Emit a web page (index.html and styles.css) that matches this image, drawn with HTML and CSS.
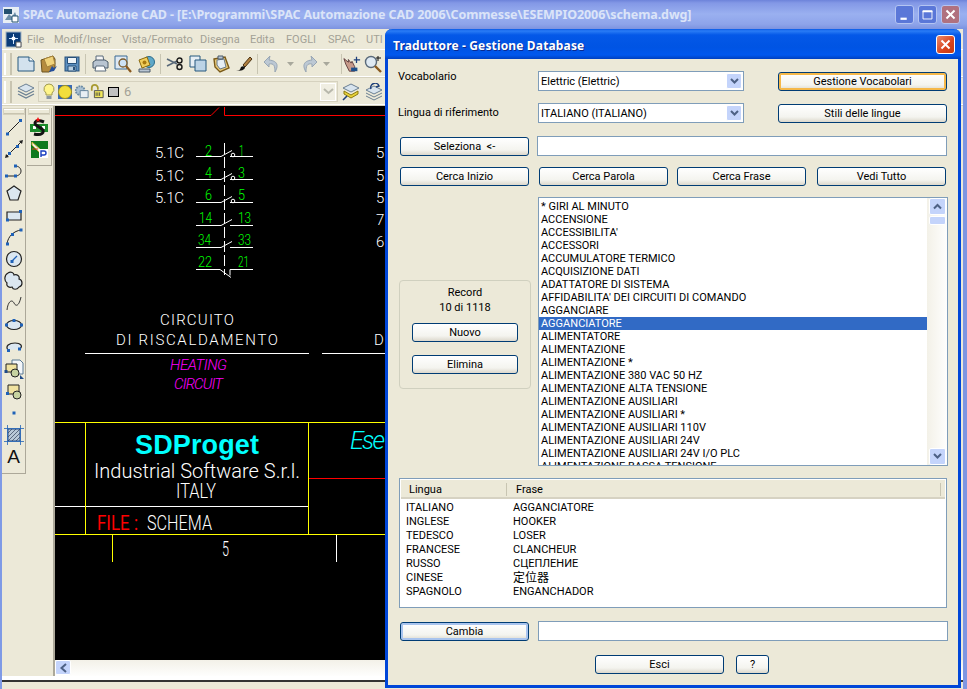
FILE: index.html
```html
<!DOCTYPE html>
<html lang="it">

<head>
    <meta charset="UTF-8">
    <meta name="viewport" content="width=device-width, initial-scale=1.0">
    <title>SPAC Automazione CAD</title>
    <link rel="stylesheet" href="styles.css">
</head>

<body>
    <div id="desktop">
        <!-- Finestra principale -->
        <div id="main-window">
            <div class="main-title">
                <svg class="app-icon" width="16" height="16" viewBox="0 0 16 16"><rect width="16" height="16" fill="#e8eef4"/><path d="M1 2h8v5H1z" fill="#23506e"/><path d="M2 13l4-6 3 3 3-5 3 8z" fill="#6d8fa8"/><path d="M9 9h6v6H9z" fill="#fff" stroke="#23506e"/></svg>
                <span class="main-title-text">SPAC Automazione CAD - [E:\Programmi\SPAC Automazione CAD 2006\Commesse\ESEMPIO2006\schema.dwg]</span>
                <div class="caption-buttons">
                    <span class="cap-btn"><svg width="19" height="19" viewBox="0 0 19 19"><path d="M5 13h7v2.500H5z" fill="#fff"/></svg></span>
                    <span class="cap-btn"><svg width="19" height="19" viewBox="0 0 19 19"><path d="M4.500 5.500h10v9h-10z" fill="none" stroke="#fff"/><path d="M4 5h11v2H4z" fill="#fff"/></svg></span>
                    <span class="cap-btn cap-close-off"><svg width="19" height="19" viewBox="0 0 19 19"><path d="M5 5l9 9M14 5l-9 9" stroke="#fff" stroke-width="2.200"/></svg></span>
                </div>
            </div>

            <div class="menu-bar">
                <svg class="doc-icon" width="17" height="17" viewBox="0 0 17 17"><rect x="1" y="1" width="15" height="15" fill="#0b3c78" stroke="#9fb2c4"/><path d="M8.500 3v10M4 7.500h9" stroke="#cfe6ff"/><circle cx="8.500" cy="7.500" r="2" fill="#fff"/><path d="M11 11h5v5h-5z" fill="#fff" stroke="#555"/></svg>
                <span class="menu-item m-file">File</span>
                <span class="menu-item m-modif">Modif/Inser</span>
                <span class="menu-item m-vista">Vista/Formato</span>
                <span class="menu-item m-disegna">Disegna</span>
                <span class="menu-item m-edita">Edita</span>
                <span class="menu-item m-fogli">FOGLI</span>
                <span class="menu-item m-spac">SPAC</span>
                <span class="menu-item">UTI</span>
            </div>

            <div class="toolbar">
                <span class="grip"></span>
                <span class="tb-btn"><svg width="18" height="16" viewBox="0 0 18 16"><path d="M1 1h11l5 4v10H1z" fill="#d3e2ee" stroke="#27597f"/><path d="M12 1v4h5" fill="#fff" stroke="#27597f"/></svg></span>
                <span class="tb-btn"><svg width="18" height="18" viewBox="0 0 18 18"><path d="M1 5l12-4 2 3v9l-6 4H2z" fill="#b58b3e" stroke="#6b5320"/><path d="M4 4l9-3 2 8-8 3z" fill="#f0d27a" stroke="#a4823a"/><path d="M9 17l3-6 2 2 3-2-3 5z" fill="#234f9c"/></svg></span>
                <span class="tb-btn"><svg width="16" height="16" viewBox="0 0 16 16"><rect x="1" y="1" width="14" height="14" fill="#5c8fc0" stroke="#27507a"/><path d="M3.500 1.500h9v6h-9z" fill="#eef3f7" stroke="#27507a"/><path d="M4 10h8v5H4z" fill="#b9cfe2" stroke="#27507a"/><path d="M9 11h2v3H9z" fill="#27507a"/></svg></span>
                <span class="tb-sep"></span>
                <span class="tb-btn"><svg width="18" height="17" viewBox="0 0 18 17"><path d="M5 1h7l1 6H5z" fill="#f6f6f6" stroke="#5a6a7a"/><path d="M2 7l3-2h9l3 2v6H2z" fill="#b9c5d2" stroke="#4a5a6a"/><path d="M5 11h8l2 5H4z" fill="#fff" stroke="#5a6a7a"/></svg></span>
                <span class="tb-btn"><svg width="18" height="18" viewBox="0 0 18 18"><path d="M1 1h12v13H1z" fill="#dfe9f2" stroke="#3a6a94"/><circle cx="9" cy="8" r="4" fill="#cde2f5" stroke="#7a5a2a" stroke-width="1.300"/><path d="M12 11l5 6" stroke="#8a5a20" stroke-width="2.200"/></svg></span>
                <span class="tb-btn"><svg width="18" height="18" viewBox="0 0 18 18"><circle cx="12" cy="7" r="5.500" fill="#5fa8c8" stroke="#2a6a8a"/><path d="M2 5l8-3 3 8-8 3z" fill="#f2cf5c" stroke="#8a6a10"/><circle cx="7.500" cy="7.500" r="2" fill="#a87a10"/><path d="M2 14h11v3H2z" fill="#b9c5d2" stroke="#4a5a6a"/></svg></span>
                <span class="tb-sep tb-sep-wide"></span>
                <span class="tb-btn"><svg width="18" height="14" viewBox="0 0 18 14"><path d="M1 2l10 5M1 9l10-5" stroke="#5a6a7a" stroke-width="1.600"/><circle cx="13.500" cy="3.500" r="2.500" fill="none" stroke="#1a1a1a" stroke-width="1.400"/><circle cx="13.500" cy="10" r="2.500" fill="none" stroke="#1a1a1a" stroke-width="1.400"/></svg></span>
                <span class="tb-btn"><svg width="18" height="17" viewBox="0 0 18 17"><path d="M1 1h10v11H1z" fill="#e6eef5" stroke="#27597f"/><path d="M6 5h11v11H6z" fill="#bcd3e6" stroke="#27597f"/></svg></span>
                <span class="tb-btn"><svg width="18" height="18" viewBox="0 0 18 18"><path d="M2 4l11-2 4 11-9 4-5-5z" fill="#e8c978" stroke="#7a5a1a" stroke-width="1.400"/><path d="M5 5l7-1 2 8-6 2-3-4z" fill="#e6eef5" stroke="#6a7a8a"/><path d="M6 1h5v3H6z" fill="#b9c5d2" stroke="#4a5a6a"/></svg></span>
                <span class="tb-btn"><svg width="18" height="16" viewBox="0 0 18 16"><path d="M8 9l7-8 2 2-7 8z" fill="#b08040" stroke="#4a3010"/><path d="M1 15c3 0 4-1 5-4 1-1 3-1 4 0 0 3-4 4-9 4z" fill="#111"/></svg></span>
                <span class="tb-sep"></span>
                <span class="tb-btn"><svg width="18" height="18" viewBox="0 0 18 18"><path d="M7 1L1 7l5 5V9c5-1 6 2 6 8 3-5 4-11-6-12z" fill="#bcc8d4" stroke="#98a6b4"/></svg></span>
                <span class="tb-small"><svg width="7" height="4" viewBox="0 0 7 4"><path d="M0 0h7L3.500 4z" fill="#a8a89c"/></svg></span>
                <span class="tb-btn tb-redo"><svg width="18" height="18" viewBox="0 0 18 18"><path d="M11 1l6 6-5 5V9C7 8 6 11 6 17 3 12 2 6 12 5z" fill="#bcc8d4" stroke="#98a6b4"/></svg></span>
                <span class="tb-small"><svg width="7" height="4" viewBox="0 0 7 4"><path d="M0 0h7L3.500 4z" fill="#a8a89c"/></svg></span>
                <span class="tb-sep tb-sep-last"></span>
                <span class="tb-btn tb-hand"><svg width="20" height="18" viewBox="0 0 20 18"><path d="M1 3l5 4 0-3 3 4 1-2 3 6v5H7L3 9z" fill="#c89a8a" stroke="#5a3a3a"/><path d="M15 1v7M12 4.500h7" stroke="#1d3f7a" stroke-width="1.400"/><path d="M9 13h7v4H9z" fill="#1d4f8a"/></svg></span>
                <span class="tb-btn"><svg width="18" height="18" viewBox="0 0 18 18"><circle cx="7" cy="7" r="5.500" fill="#dfeaf3" stroke="#5a6a7a" stroke-width="1.400"/><path d="M11 11l6 6" stroke="#8a5a20" stroke-width="2.400"/><path d="M14 1v5M12 3h5" stroke="#111"/></svg></span>
            </div>

            <div class="toolbar toolbar-layers">
                <span class="grip"></span>
                <span class="tb-btn"><svg width="18" height="17" viewBox="0 0 18 17"><path d="M9 1l8 4-8 4-8-4z" fill="#d8e4ee" stroke="#6a7f92"/><path d="M1 8l8 4 8-4M1 11l8 4 8-4" fill="none" stroke="#6a7f92" stroke-width="1.200"/></svg></span>
                <div class="layer-combo">
                    <svg width="14" height="17" viewBox="0 0 14 17"><path d="M7 1a5 5 0 0 1 3 9v2H4v-2a5 5 0 0 1 3-9z" fill="#fff58a" stroke="#a09a50"/><path d="M4.500 13h5v3h-5z" fill="#8a97a4"/></svg>
                    <svg width="16" height="16" viewBox="0 0 16 16"><rect x="1" y="1" width="14" height="14" fill="#3a6ab4"/><circle cx="8" cy="8" r="6.500" fill="#f2de3c" stroke="#a09020"/></svg>
                    <svg width="15" height="15" viewBox="0 0 17 16"><circle cx="7" cy="7" r="5" fill="#a9bfd0" stroke="#6a8aa4" stroke-width="2" stroke-dasharray="2 1"/><path d="M7 7h9v8H7z" fill="#e8eef3" stroke="#5a7a94"/></svg>
                    <svg width="14" height="15" viewBox="0 0 16 16"><path d="M2 7V4a3.500 3.500 0 0 1 7 0v2" fill="none" stroke="#a89a30" stroke-width="2"/><path d="M5 7h10v8H5z" fill="#f2e85a" stroke="#444"/><path d="M7 9v4M9 9v4M11 9v4" stroke="#444"/></svg>
                    <span class="color-box"></span>
                    <span class="layer-name">6</span>
                    <span class="combo-arrow"><svg width="11" height="7" viewBox="0 0 11 7"><path d="M1 1l4.500 4L10 1" fill="none" stroke="#b8b8ac" stroke-width="2"/></svg></span>
                </div>
                <span class="tb-btn"><svg width="18" height="18" viewBox="0 0 18 18"><path d="M9 1l8 4-8 4-8-4z" fill="#d8e4ee" stroke="#6a7f92"/><path d="M2 8l7 4 7-4v3l-7 4-7-4z" fill="#e8d23a" stroke="#8a7a10"/><path d="M1 17l4-4" stroke="#1d3f7a" stroke-width="1.600"/></svg></span>
                <span class="tb-btn"><svg width="18" height="18" viewBox="0 0 18 18"><path d="M9 3l8 4-8 4-8-4z" fill="#d8e4ee" stroke="#6a7f92"/><path d="M1 10l8 4 8-4M1 13l8 4 8-4" fill="none" stroke="#6a7f92"/><path d="M6 6a4 4 0 0 1 8-3l-3 1" fill="none" stroke="#1d3f7a" stroke-width="1.500"/></svg></span>
            </div>

            <div class="work-area">
                <div class="dock">
                    <div class="tool-col">
                        <span class="tool-grip"></span>
                        <span class="tool"><svg width="20" height="20" viewBox="0 0 20 20"><path d="M3 17L17 3" stroke="#222"/><path d="M2 15.500h3v3H2zM15 2h3v3h-3z" fill="#1f62b8"/></svg></span>
                        <span class="tool"><svg width="20" height="20" viewBox="0 0 20 20"><path d="M2 18L18 2" stroke="#222"/><path d="M4 13h3v3H4zM12 6h3v3h-3z" fill="#1f62b8"/><path d="M19 1l-4 1 3 3zM1 19l4-1-3-3z" fill="#222"/></svg></span>
                        <span class="tool"><svg width="20" height="20" viewBox="0 0 20 20"><path d="M2 15h10M11 5c8 0 8 10 0 10" fill="none" stroke="#222"/><path d="M1 13.500h3v3H1zM10 13.500h3v3h-3zM10 3.500h3v3h-3z" fill="#1f62b8"/></svg></span>
                        <span class="tool"><svg width="20" height="20" viewBox="0 0 20 20"><path d="M10 3l7 5-3 9H6L3 8z" fill="#dbe7f1" stroke="#222" stroke-width="1.200"/></svg></span>
                        <span class="tool"><svg width="20" height="20" viewBox="0 0 20 20"><path d="M3 7h14v8H3z" fill="#dbe7f1" stroke="#222" stroke-width="1.200"/><path d="M2 13.500h3v3H2zM15 5h3v3h-3z" fill="#1f62b8"/></svg></span>
                        <span class="tool"><svg width="20" height="20" viewBox="0 0 20 20"><path d="M3 17C4 9 10 4 17 3" fill="none" stroke="#222"/><path d="M2 15.500h3v3H2zM7 6h3v3H7zM15.500 1.500h3v3h-3z" fill="#1f62b8"/></svg></span>
                        <span class="tool"><svg width="20" height="20" viewBox="0 0 20 20"><circle cx="10" cy="10" r="7.500" fill="#dbe7f1" stroke="#222" stroke-width="1.200"/><path d="M8 12l5-5" stroke="#1f62b8" stroke-width="1.200"/><path d="M6.500 11h3v3h-3z" fill="#1f62b8"/></svg></span>
                        <span class="tool"><svg width="20" height="20" viewBox="0 0 20 20"><path d="M4 2c3-2 6 0 6 2 3-1 6 1 5 4 4 1 4 7 0 8-2 3-6 3-7 0-3 1-6-1-5-4C0 10 0 4 4 2z" fill="#dbe7f1" stroke="#222" stroke-width="1.200"/></svg></span>
                        <span class="tool"><svg width="20" height="20" viewBox="0 0 20 20"><path d="M3 17C4 8 8 6 10 10s5 3 7-6" fill="none" stroke="#333"/></svg></span>
                        <span class="tool"><svg width="20" height="20" viewBox="0 0 20 20"><ellipse cx="10" cy="10" rx="7.500" ry="4.500" fill="#dbe7f1" stroke="#222" stroke-width="1.200"/><path d="M1 8.500h3v3H1zM16 8.500h3v3h-3zM8.500 4h3v3h-3z" fill="#1f62b8"/></svg></span>
                        <span class="tool"><svg width="20" height="20" viewBox="0 0 20 20"><path d="M4 13C1 9 5 6 11 6s8 3 5 6" fill="#dbe7f1" stroke="#222" stroke-width="1.200"/><path d="M3 12h3v3H3zM14 10.500h3v3h-3z" fill="#1f62b8"/></svg></span>
                        <span class="tool"><svg width="20" height="20" viewBox="0 0 20 20"><path d="M8 1h8l3 3v11H8z" fill="#f3f6f9" stroke="#5a7a94"/><path d="M2 5h11v8H2z" fill="#f0e2a0" stroke="#222"/><circle cx="11" cy="14" r="4" fill="#c6d2a0" stroke="#222"/><path d="M0.500 11h3v3h-3zM16 16l4 4h-4z" fill="#1f4a88"/></svg></span>
                        <span class="tool"><svg width="20" height="20" viewBox="0 0 20 20"><path d="M4 4h11v9H4z" fill="#f0e2a0" stroke="#222"/><circle cx="13" cy="14" r="4" fill="#c6d2a0" stroke="#222"/><path d="M2 11h3v3H2z" fill="#1f62b8"/></svg></span>
                        <span class="tool"><svg width="20" height="20" viewBox="0 0 20 20"><path d="M8.500 8.500h3v3h-3z" fill="#1f62b8"/></svg></span>
                        <span class="tool"><svg width="20" height="20" viewBox="0 0 20 20"><path d="M4 4h12v12H4z" fill="#b9c8d8" stroke="#1f4a88"/><path d="M4 8l4-4M4 12l8-8M4 16L16 4M8 16l8-8M12 16l4-4" stroke="#33415a" stroke-width=".7"/><path d="M0 3.500h20M0 16.500h20M3.500 0v20M16.500 0v20" stroke="#1f62b8" stroke-width=".8"/></svg></span>
                        <span class="tool tool-a">A</span>
                    </div>
                    <div class="tool-col tool-col-short">
                        <span class="tool-grip"></span>
                        <span class="tool"><svg width="18" height="20" viewBox="0 0 18 20"><path d="M0 7h18v8H0z" fill="#1a8a2a"/><path d="M3 9h3v3H3zM12 9h3v3h-3z" fill="#fff"/><path d="M14 5C7 2 3 5 6 8l6 4c3 3 0 7-8 5" fill="none" stroke="#111" stroke-width="3"/><path d="M8 0l1 2 2 0-2 1 1 2-2-1-2 1 1-2-2-1 2 0z" fill="#ee1111"/></svg></span>
                        <span class="tool"><svg width="17" height="17" viewBox="0 0 17 17"><rect width="17" height="17" fill="#0e7a1e"/><path d="M1 1l9 8-2 2-7-7z" fill="#eee" stroke="#c9b030"/><path d="M1 8h6" stroke="#c42"/><path d="M8 8h9v9H8z" fill="#fff"/><path d="M10 16V10h3a1.500 1.500 0 0 1 0 4h-3" fill="none" stroke="#1a3fc0" stroke-width="1.400"/></svg></span>
                    </div>
                </div>
                <div class="viewport">
                    <svg class="drawing" width="331" height="554" viewBox="55 106 331 554">
                        <g class="cad-lines">
                            <path class="red" d="M55 115.500h156l8-8M224.500 107v8.500H386M308 478.500h78"/>
                            <path class="white" d="M196 156.500h25l11-6M230 156.500h23M196 179.500h25l11-6M230 179.500h23M196 202.500h25l11-6M230 202.500h23M196 225.500h25l11-6M230 225.500h23M196 247.500h25l11-6M230 247.500h23"/>
                            <path class="white" d="M196 269.500h24l11 8M253 269.500h-23v6"/>
                            <path class="white dash" d="M224.500 143v132"/>
                            <circle class="white" cx="233" cy="155" r="1.800"/>
                            <circle class="white" cx="233" cy="178" r="1.800"/>
                            <circle class="white" cx="233" cy="201" r="1.800"/>
                            <path class="white" d="M85 353.500h224M322 353.500h64M55 506.500h253M336.500 534v28"/>
                            <path class="yellow" d="M55 422.500h331M85.500 422v112M308.500 422v112M55 534.500h331M112.500 534v28"/>
                        </g>
                        <g class="cad-text">
                            <text x="155" y="158" textLength="29">5.1C</text>
                            <text x="155" y="181" textLength="29">5.1C</text>
                            <text x="155" y="203" textLength="29">5.1C</text>
                            <text x="376" y="158">5</text>
                            <text x="376" y="181">5</text>
                            <text x="376" y="203">5</text>
                            <text x="376" y="225">7</text>
                            <text x="376" y="247">6</text>
                            <text x="160" y="325" textLength="74">CIRCUITO</text>
                            <text x="116" y="345" textLength="162">DI RISCALDAMENTO</text>
                            <text x="374" y="345">D</text>
                            <text class="cad-mid" x="94" y="478" textLength="206">Industrial Software S.r.l.</text>
                            <text class="cad-mid" x="176" y="498" textLength="40" lengthAdjust="spacingAndGlyphs">ITALY</text>
                            <text class="cad-mid" x="147" y="530" textLength="65" lengthAdjust="spacingAndGlyphs">SCHEMA</text>
                            <text class="cad-mid" x="222" y="556" textLength="7" lengthAdjust="spacingAndGlyphs">5</text>
                        </g>
                        <g class="cad-green">
                            <text x="205" y="156" textLength="7" lengthAdjust="spacingAndGlyphs">2</text><text x="239" y="156" textLength="5" lengthAdjust="spacingAndGlyphs">1</text>
                            <text x="205" y="178" textLength="7" lengthAdjust="spacingAndGlyphs">4</text><text x="238" y="178" textLength="7" lengthAdjust="spacingAndGlyphs">3</text>
                            <text x="205" y="200" textLength="7" lengthAdjust="spacingAndGlyphs">6</text><text x="238" y="200" textLength="7" lengthAdjust="spacingAndGlyphs">5</text>
                            <text x="199" y="223" textLength="13" lengthAdjust="spacingAndGlyphs">14</text><text x="238" y="223" textLength="13" lengthAdjust="spacingAndGlyphs">13</text>
                            <text x="198" y="245" textLength="13" lengthAdjust="spacingAndGlyphs">34</text><text x="238" y="245" textLength="13" lengthAdjust="spacingAndGlyphs">33</text>
                            <text x="198" y="267" textLength="14" lengthAdjust="spacingAndGlyphs">22</text><text x="238" y="267" textLength="11" lengthAdjust="spacingAndGlyphs">21</text>
                        </g>
                        <text class="cad-magenta" x="170" y="370" textLength="57">HEATING</text>
                        <text class="cad-magenta" x="174" y="389" textLength="49">CIRCUIT</text>
                        <text class="cad-logo" x="135" y="454" textLength="124">SDProget</text>
                        <text class="cad-ese" x="350" y="449" textLength="35">Ese</text>
                        <text class="cad-red" x="97" y="530" textLength="41" lengthAdjust="spacingAndGlyphs">FILE :</text>
                    </svg>
                    <div class="h-scroll">
                        <span class="h-scroll-btn"><svg width="9" height="10" viewBox="0 0 9 10"><path d="M7 1L2.500 5 7 9" fill="none" stroke="#4d6185" stroke-width="2"/></svg></span>
                    </div>
                </div>
            </div>
            <div class="status-bar"></div>
        </div>

        <!-- Finestra di dialogo -->
        <div id="dialog">
            <div class="dialog-title">
                <span class="dialog-title-text">Traduttore - Gestione Database</span>
                <span class="dialog-close"><svg width="19" height="19" viewBox="0 0 19 19"><path d="M5 5l9 9M14 5l-9 9" stroke="#fff" stroke-width="2.200"/></svg></span>
            </div>
            <div class="dialog-body">
                <div class="row row-top">
                    <label class="field-label">Vocabolario</label>
                    <div class="combo">
                        <span>Elettric (Elettric)</span>
                        <span class="scroll-btn"><svg width="9" height="7" viewBox="0 0 9 7"><path d="M1 1l3.500 3.500L8 1" fill="none" stroke="#4d6185" stroke-width="2"/></svg></span>
                    </div>
                    <button class="xp-btn btn-focus btn-side">Gestione Vocabolari</button>
                </div>
                <div class="row row-top row-lang">
                    <label class="field-label">Lingua di riferimento</label>
                    <div class="combo">
                        <span>ITALIANO (ITALIANO)</span>
                        <span class="scroll-btn"><svg width="9" height="7" viewBox="0 0 9 7"><path d="M1 1l3.500 3.500L8 1" fill="none" stroke="#4d6185" stroke-width="2"/></svg></span>
                    </div>
                    <button class="xp-btn btn-side">Stili delle lingue</button>
                </div>
                <div class="row row-select">
                    <button class="xp-btn btn-wide">Seleziona &nbsp;&lt;-</button>
                    <div class="text-box"></div>
                </div>
                <div class="row row-search">
                    <button class="xp-btn btn-wide">Cerca Inizio</button>
                    <button class="xp-btn btn-wide btn-parola">Cerca Parola</button>
                    <button class="xp-btn btn-wide">Cerca Frase</button>
                    <button class="xp-btn btn-wide btn-tutto">Vedi Tutto</button>
                </div>
                <div class="row row-list">
                    <div class="record-col">
                        <div class="record-group">
                            <div class="record-text">Record<br>10 di 1118</div>
                            <button class="xp-btn btn-record">Nuovo</button>
                            <button class="xp-btn btn-record">Elimina</button>
                        </div>
                    </div>
                    <div class="word-list">
                        <ul class="word-items">
                            <li>* GIRI AL MINUTO</li>
                            <li>ACCENSIONE</li>
                            <li>ACCESSIBILITA'</li>
                            <li>ACCESSORI</li>
                            <li>ACCUMULATORE TERMICO</li>
                            <li>ACQUISIZIONE DATI</li>
                            <li>ADATTATORE DI SISTEMA</li>
                            <li>AFFIDABILITA' DEI CIRCUITI DI COMANDO</li>
                            <li>AGGANCIARE</li>
                            <li class="selected">AGGANCIATORE</li>
                            <li>ALIMENTATORE</li>
                            <li>ALIMENTAZIONE</li>
                            <li>ALIMENTAZIONE *</li>
                            <li>ALIMENTAZIONE 380 VAC 50 HZ</li>
                            <li>ALIMENTAZIONE ALTA TENSIONE</li>
                            <li>ALIMENTAZIONE AUSILIARI</li>
                            <li>ALIMENTAZIONE AUSILIARI *</li>
                            <li>ALIMENTAZIONE AUSILIARI 110V</li>
                            <li>ALIMENTAZIONE AUSILIARI 24V</li>
                            <li>ALIMENTAZIONE AUSILIARI 24V I/O PLC</li>
                            <li>ALIMENTAZIONE BASSA TENSIONE</li>
                        </ul>
                        <div class="v-scroll">
                            <span class="scroll-btn"><svg width="9" height="7" viewBox="0 0 9 7"><path d="M1 5.500L4.500 2 8 5.500" fill="none" stroke="#4d6185" stroke-width="2"/></svg></span>
                            <span class="scroll-thumb"></span>
                            <span class="scroll-btn scroll-end"><svg width="9" height="7" viewBox="0 0 9 7"><path d="M1 1l3.500 3.500L8 1" fill="none" stroke="#4d6185" stroke-width="2"/></svg></span>
                        </div>
                    </div>
                </div>
                <div class="phrase-table">
                    <div class="table-head">
                        <span class="head-lingua">Lingua</span>
                        <span class="head-frase">Frase</span>
                    </div>
                    <div class="table-row"><span>ITALIANO</span><span>AGGANCIATORE</span></div>
                    <div class="table-row"><span>INGLESE</span><span>HOOKER</span></div>
                    <div class="table-row"><span>TEDESCO</span><span>LOSER</span></div>
                    <div class="table-row"><span>FRANCESE</span><span>CLANCHEUR</span></div>
                    <div class="table-row"><span>RUSSO</span><span>СЦЕПЛЕНИЕ</span></div>
                    <div class="table-row"><span>CINESE</span><span class="cjk">定位器</span></div>
                    <div class="table-row"><span>SPAGNOLO</span><span>ENGANCHADOR</span></div>
                </div>
                <div class="row row-change">
                    <button class="xp-btn btn-wide btn-default">Cambia</button>
                    <div class="text-box"></div>
                </div>
                <div class="row row-exit">
                    <button class="xp-btn btn-wide">Esci</button>
                    <button class="xp-btn btn-help">?</button>
                </div>
            </div>
        </div>
    </div>
</body>

</html>
```

FILE: styles.css
```css
/* Pagina */
body {
    margin: 0;
    font-family: "Roboto", "Noto Sans CJK SC", sans-serif;
    font-size: 11px;
    color: #000;
}

#desktop {
    position: relative;
    width: 967px;
    height: 689px;
    overflow: hidden;
    background-color: #ece9d8;
}

/* Finestra principale */
#main-window {
    height: 689px;
    display: flex;
    flex-direction: column;
    border-left: 2px solid #7f9ae6;
    border-right: 4px solid #7f96e2;
    box-sizing: border-box;
}

.main-title {
    height: 29px;
    margin: 0 -4px 0 -2px;
    padding: 0 7px 0 3px;
    display: flex;
    align-items: center;
    box-sizing: border-box;
    flex-shrink: 0;
    background: linear-gradient(#6d83da 0, #8398e6 3px, #9ab0f0 14px, #8ea4ea 24px, #7c93e0 29px);
}

.app-icon {
    margin-right: 4px;
}

.main-title-text {
    flex: 1;
    color: #dbe4f8;
    font-family: "Noto Sans", sans-serif;
    font-weight: bold;
    font-size: 12.500px;
    letter-spacing: -0.1px;
    white-space: nowrap;
    overflow: hidden;
}

.caption-buttons {
    display: flex;
    gap: 4px;
}

.cap-btn {
    width: 19px;
    height: 19px;
    border: 1px solid #b4c4f2;
    border-radius: 3px;
    box-sizing: border-box;
    background: #5a77d8;
    display: flex;
    align-items: center;
    justify-content: center;
}

.cap-close-off {
    background: #b0717f;
}

.menu-bar {
    height: 20px;
    padding-left: 3px;
    display: flex;
    align-items: center;
    flex-shrink: 0;
    border-bottom: 1px solid #fff;
    color: #a3a196;
    font-size: 11px;
}

.doc-icon {
    margin-right: 5px;
}

.menu-item {
    white-space: nowrap;
}

.m-file { width: 27px; }
.m-modif { width: 68px; }
.m-vista { width: 78px; }
.m-disegna { width: 50px; }
.m-edita { width: 36px; }
.m-fogli { width: 42px; }
.m-spac { width: 38px; }

.toolbar {
    height: 28px;
    padding-left: 2px;
    display: flex;
    align-items: center;
    flex-shrink: 0;
    box-sizing: border-box;
    border-bottom: 1px solid #d6d2bf;
    box-shadow: inset 0 -1px 0 #fff;
}

.grip {
    width: 4px;
    height: 22px;
    margin-right: 2px;
    border-left: 2px solid #fff;
    border-right: 2px solid #c8c4b0;
}

.tb-btn {
    width: 23px;
    height: 24px;
    display: flex;
    align-items: center;
    justify-content: center;
    flex-shrink: 0;
}

.tb-redo {
    width: 21px;
}

.tb-hand {
    width: 18px;
}

.tb-small {
    width: 15px;
    display: flex;
    justify-content: center;
    flex-shrink: 0;
}

.tb-sep {
    width: 1px;
    height: 20px;
    margin: 0 2px;
    background-color: #c8c5b2;
    flex-shrink: 0;
}

.tb-sep-wide {
    margin: 0 2px 0 3px;
}

.tb-sep-last {
    margin: 0 1px 0 7px;
}

.toolbar-layers {
    height: 28px;
}

.layer-combo {
    width: 300px;
    height: 21px;
    margin: 0 1px 0 1px;
    padding-left: 3px;
    display: flex;
    align-items: center;
    gap: 1px;
    box-sizing: border-box;
    border: 1px solid #d6d2bf;
    flex-shrink: 0;
}

.color-box {
    width: 11px;
    height: 10px;
    margin-left: 3px;
    box-sizing: border-box;
    background-color: #c0c0c0;
    border: 1px solid #000;
}

.layer-name {
    margin-left: 4px;
    color: #a3a196;
    font-size: 13px;
}

.combo-arrow {
    width: 16px;
    height: 18px;
    margin-left: auto;
    margin-right: 1px;
    display: flex;
    align-items: center;
    justify-content: center;
    border: 1px solid #fff;
    box-sizing: border-box;
    background-color: #f0eee2;
}

.work-area {
    flex: 1;
    display: flex;
    min-height: 0;
}

.dock {
    width: 53px;
    padding: 2px 0 0 0;
    display: flex;
    gap: 1px;
    align-items: flex-start;
    box-sizing: border-box;
    flex-shrink: 0;
    border-right: 2px solid #aca899;
}

.tool-col {
    width: 24px;
    display: flex;
    flex-direction: column;
    align-items: center;
    border-right: 1px solid #aca899;
    border-bottom: 1px solid #aca899;
    box-sizing: border-box;
    padding-bottom: 5px;
}

.tool-col-short {
    width: 25px;
}

.tool-grip {
    width: 20px;
    height: 3px;
    margin: 1px 0 2px;
    border-top: 1px solid #fff;
    border-bottom: 1px solid #c8c4b0;
    outline: 1px solid #d6d2bf;
}

.tool {
    height: 22px;
    display: flex;
    align-items: center;
    justify-content: center;
}

.tool-a {
    font-family: "Liberation Sans", sans-serif;
    font-size: 19px;
    color: #111;
}

.viewport {
    flex: 1;
    display: flex;
    flex-direction: column;
    min-width: 0;
}

.drawing {
    display: block;
    background-color: #000;
    flex-shrink: 0;
}

/* Disegno CAD */
.cad-lines path,
.cad-lines circle {
    fill: none;
    stroke-width: 1;
}

.cad-lines .red { stroke: #ff0000; }
.cad-lines .white { stroke: #fff; }
.cad-lines .yellow { stroke: #ffff00; }
.cad-lines .dash { stroke-dasharray: 11 3; }

.cad-text text {
    fill: #fff;
    font-family: "Roboto", sans-serif;
    font-weight: 300;
    font-size: 15px;
}

.cad-text .cad-mid {
    font-size: 20px;
}

.cad-green text {
    fill: #00ff00;
    font-family: "Roboto", sans-serif;
    font-weight: 300;
    font-size: 15px;
}

.cad-magenta {
    fill: #ff00ff;
    font-family: "Roboto", sans-serif;
    font-weight: 300;
    font-style: italic;
    font-size: 15px;
}

.cad-logo {
    fill: #00ffff;
    font-family: "Liberation Sans", sans-serif;
    font-weight: bold;
    font-size: 27px;
}

.cad-ese {
    fill: #00ffff;
    font-family: "Roboto", sans-serif;
    font-weight: 300;
    font-style: italic;
    font-size: 25px;
}

.cad-red {
    fill: #ff0000;
    font-family: "Roboto", sans-serif;
    font-weight: 400;
    font-size: 20px;
}

.h-scroll {
    height: 16px;
    flex-shrink: 0;
    background: linear-gradient(#f3f1e8, #fefefd);
}

.h-scroll-btn {
    width: 16px;
    height: 15px;
    display: flex;
    align-items: center;
    justify-content: center;
    border: 1px solid #fff;
    border-radius: 2px;
    box-sizing: border-box;
    background-color: #c4d4fb;
}

.status-bar {
    height: 13px;
    margin-top: auto;
    flex-shrink: 0;
    box-sizing: border-box;
    border-top: 4px solid #fff;
    box-shadow: inset 0 2px 0 #333;
}

/* Finestra di dialogo */
#dialog {
    position: absolute;
    left: 385px;
    top: 29px;
    width: 576px;
    height: 659px;
    display: flex;
    flex-direction: column;
    box-sizing: border-box;
    border: 3px solid #0046d8;
    border-top: none;
    border-radius: 7px 7px 0 0;
    background-color: #ece9d8;
}

.dialog-title {
    height: 30px;
    margin: 0 -3px;
    padding: 0 6px 0 8px;
    display: flex;
    align-items: center;
    justify-content: space-between;
    flex-shrink: 0;
    box-sizing: border-box;
    border-radius: 7px 7px 0 0;
    background: linear-gradient(#0a5ae6 0, #2a7cf6 2px, #0458e8 6px, #0054e3 18px, #0058ee 26px, #0040c0 30px);
    color: #fff;
    font-family: "Noto Sans", sans-serif;
    font-weight: bold;
    font-size: 12px;
    letter-spacing: 0.15px;
    text-shadow: 1px 1px 0 #0a2a90;
}

.dialog-title-text {
    margin-top: 3px;
}

.dialog-close {
    width: 19px;
    height: 19px;
    display: flex;
    align-items: center;
    justify-content: center;
    border: 1px solid #fff;
    border-radius: 3px;
    box-sizing: border-box;
    background: linear-gradient(135deg, #ea8a6a, #d8431c 60%, #c43a10);
}

.dialog-body {
    flex: 1;
    padding: 12px 10px 0 12px;
    display: flex;
    flex-direction: column;
}

.row {
    display: flex;
    align-items: center;
    flex-shrink: 0;
}

.row-top {
    height: 20px;
}

.row-lang {
    margin-top: 12px;
}

.field-label {
    width: 138px;
    margin-left: -2px;
    margin-right: 2px;
    margin-top: -9px;
}

.row-lang .field-label {
    margin-top: -2px;
}

.combo {
    width: 206px;
    height: 20px;
    padding: 0 1px 0 2px;
    display: flex;
    align-items: center;
    justify-content: space-between;
    box-sizing: border-box;
    border: 1px solid #7f9db9;
    background-color: #fff;
}

.scroll-btn {
    width: 16px;
    height: 16px;
    display: flex;
    align-items: center;
    justify-content: center;
    flex-shrink: 0;
    box-sizing: border-box;
    border: 1px solid #fff;
    border-radius: 2px;
    background-color: #c4d4fb;
}

.xp-btn {
    height: 19px;
    padding: 0;
    box-sizing: border-box;
    border: 1px solid #003c74;
    border-radius: 3px;
    background: linear-gradient(#fff, #f4f4ef 70%, #dcd8cc);
    color: #000;
    font-family: inherit;
    font-size: 11px;
    white-space: nowrap;
}

.btn-side {
    width: 169px;
    margin-left: 34px;
}

.btn-focus {
    box-shadow: inset 0 0 0 2px #f5b84a;
}

.btn-default {
    box-shadow: inset 0 0 0 2px #a9c4ee;
}

.btn-wide {
    width: 129px;
}

.row-select {
    margin-top: 13px;
    height: 20px;
}

.row-select .text-box {
    margin-left: 8px;
    width: 410px;
}

.text-box {
    height: 20px;
    box-sizing: border-box;
    border: 1px solid #7f9db9;
    background-color: #fff;
}

.row-search {
    margin-top: 10px;
    height: 20px;
    width: 546px;
}

.btn-parola {
    margin-left: 10px;
    margin-right: 9px;
}

.btn-tutto {
    margin-left: 11px;
}

.row-list {
    margin-top: 11px;
    align-items: flex-start;
}

.record-col {
    width: 138px;
    flex-shrink: 0;
}

.record-group {
    width: 132px;
    height: 109px;
    margin-top: 83px;
    margin-left: -1px;
    padding-top: 4px;
    display: flex;
    flex-direction: column;
    align-items: center;
    box-sizing: border-box;
    border: 1px solid #d0d0bf;
    border-radius: 4px;
}

.record-text {
    text-align: center;
    line-height: 15px;
    margin-bottom: 8px;
}

.btn-record {
    width: 106px;
    margin-bottom: 13px;
}

.word-list {
    width: 410px;
    height: 269px;
    display: flex;
    box-sizing: border-box;
    border: 1px solid #7f9db9;
    background-color: #fff;
    overflow: hidden;
}

.word-items {
    flex: 1;
    margin: 0;
    padding: 2px 0 0;
    list-style: none;
}

.word-items li {
    height: 13px;
    line-height: 13px;
    padding-left: 2px;
    white-space: nowrap;
}

.word-items .selected {
    background-color: #316ac5;
    color: #fff;
}

.v-scroll {
    width: 20px;
    display: flex;
    flex-direction: column;
    align-items: center;
    background: linear-gradient(90deg, #f3f1e8, #fefefd);
}

.v-scroll .scroll-btn {
    width: 17px;
    height: 17px;
}

.scroll-thumb {
    width: 17px;
    height: 9px;
    margin-top: 1px;
    box-sizing: border-box;
    border: 1px solid #fff;
    border-radius: 2px;
    background-color: #c4d4fb;
}

.scroll-end {
    margin-top: auto;
}

.phrase-table {
    width: 548px;
    height: 130px;
    margin-top: 12px;
    margin-left: -1px;
    padding: 1px;
    box-sizing: border-box;
    border: 1px solid #7f9db9;
    background-color: #fff;
    flex-shrink: 0;
}

.table-head {
    height: 19px;
    padding-top: 1px;
    display: flex;
    align-items: center;
    box-sizing: border-box;
    border-bottom: 2px solid #d6d2c2;
    background-color: #ece9d8;
    margin-bottom: 2px;
}

.head-lingua {
    width: 106px;
    padding-left: 8px;
    box-sizing: border-box;
    border-right: 1px solid #c8c5b2;
}

.head-frase {
    flex: 1;
    padding-left: 9px;
    margin-right: 4px;
    border-right: 1px solid #c8c5b2;
}

.table-row {
    height: 14px;
    line-height: 14px;
    display: flex;
    padding-left: 5px;
}

.table-row span:first-child {
    width: 107px;
}

.cjk {
    font-size: 12px;
}

.row-change {
    margin-top: 13px;
    height: 20px;
    width: 548px;
}

.row-change .text-box {
    margin-left: 9px;
    flex: 1;
}

.row-exit {
    margin-top: 14px;
    padding-left: 195px;
    gap: 12px;
}

.btn-help {
    width: 33px;
}
```
